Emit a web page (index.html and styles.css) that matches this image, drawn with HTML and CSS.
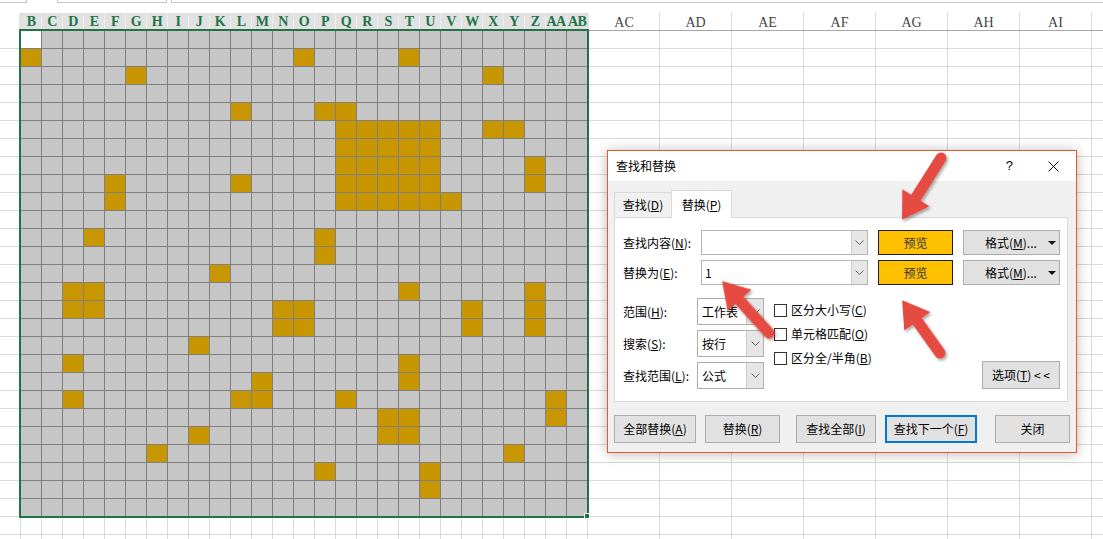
FILE: index.html
```html
<!DOCTYPE html>
<html lang="zh-CN">
<head>
<meta charset="utf-8">
<title>查找和替换</title>
<link rel="stylesheet" href="styles.css">
</head>
<body>
<div class="topbar"><div class="tb1"></div><div class="tb2"></div><div class="tb3"></div></div>
<div class="spacer"></div>
<div class="colhead">
  <div class="ch-gut"></div>
  <div class="ch-sel"><span>B</span><span>C</span><span>D</span><span>E</span><span>F</span><span>G</span><span>H</span><span>I</span><span>J</span><span>K</span><span>L</span><span>M</span><span>N</span><span>O</span><span>P</span><span>Q</span><span>R</span><span>S</span><span>T</span><span>U</span><span>V</span><span>W</span><span>X</span><span>Y</span><span>Z</span><span>AA</span><span>AB</span></div>
  <div class="ch-r"><span>AC</span><span>AD</span><span>AE</span><span>AF</span><span>AG</span><span>AH</span><span>AI</span><span></span></div>
</div>
<div class="sheet-body">
  <div class="gutter"></div>
  <div class="mid">
    <div class="grid">
<div class="r"><i class="a"></i><i></i><i></i><i></i><i></i><i></i><i></i><i></i><i></i> <i></i><i></i><i></i><i></i><i></i><i></i><i></i><i></i><i></i> <i></i><i></i><i></i><i></i><i></i><i></i><i></i><i></i><i></i></div>
<div class="r"><i class="g"></i><i></i><i></i><i></i><i></i><i></i><i></i><i></i><i></i> <i></i><i></i><i></i><i></i><i class="g"></i><i></i><i></i><i></i><i></i> <i class="g"></i><i></i><i></i><i></i><i></i><i></i><i></i><i></i><i></i></div>
<div class="r"><i></i><i></i><i></i><i></i><i></i><i class="g"></i><i></i><i></i><i></i> <i></i><i></i><i></i><i></i><i></i><i></i><i></i><i></i><i></i> <i></i><i></i><i></i><i></i><i class="g"></i><i></i><i></i><i></i><i></i></div>
<div class="r"><i></i><i></i><i></i><i></i><i></i><i></i><i></i><i></i><i></i> <i></i><i></i><i></i><i></i><i></i><i></i><i></i><i></i><i></i> <i></i><i></i><i></i><i></i><i></i><i></i><i></i><i></i><i></i></div>
<div class="r"><i></i><i></i><i></i><i></i><i></i><i></i><i></i><i></i><i></i> <i></i><i class="g"></i><i></i><i></i><i></i><i class="g"></i><i class="g"></i><i></i><i></i> <i></i><i></i><i></i><i></i><i></i><i></i><i></i><i></i><i></i></div>
<div class="r"><i></i><i></i><i></i><i></i><i></i><i></i><i></i><i></i><i></i> <i></i><i></i><i></i><i></i><i></i><i></i><i class="g"></i><i class="g"></i><i class="g"></i> <i class="g"></i><i class="g"></i><i></i><i></i><i class="g"></i><i class="g"></i><i></i><i></i><i></i></div>
<div class="r"><i></i><i></i><i></i><i></i><i></i><i></i><i></i><i></i><i></i> <i></i><i></i><i></i><i></i><i></i><i></i><i class="g"></i><i class="g"></i><i class="g"></i> <i class="g"></i><i class="g"></i><i></i><i></i><i></i><i></i><i></i><i></i><i></i></div>
<div class="r"><i></i><i></i><i></i><i></i><i></i><i></i><i></i><i></i><i></i> <i></i><i></i><i></i><i></i><i></i><i></i><i class="g"></i><i class="g"></i><i class="g"></i> <i class="g"></i><i class="g"></i><i></i><i></i><i></i><i></i><i class="g"></i><i></i><i></i></div>
<div class="r"><i></i><i></i><i></i><i></i><i class="g"></i><i></i><i></i><i></i><i></i> <i></i><i class="g"></i><i></i><i></i><i></i><i></i><i class="g"></i><i class="g"></i><i class="g"></i> <i class="g"></i><i class="g"></i><i></i><i></i><i></i><i></i><i class="g"></i><i></i><i></i></div>
<div class="r"><i></i><i></i><i></i><i></i><i class="g"></i><i></i><i></i><i></i><i></i> <i></i><i></i><i></i><i></i><i></i><i></i><i class="g"></i><i class="g"></i><i class="g"></i> <i class="g"></i><i class="g"></i><i class="g"></i><i></i><i></i><i></i><i></i><i></i><i></i></div>
<div class="r"><i></i><i></i><i></i><i></i><i></i><i></i><i></i><i></i><i></i> <i></i><i></i><i></i><i></i><i></i><i></i><i></i><i></i><i></i> <i></i><i></i><i></i><i></i><i></i><i></i><i></i><i></i><i></i></div>
<div class="r"><i></i><i></i><i></i><i class="g"></i><i></i><i></i><i></i><i></i><i></i> <i></i><i></i><i></i><i></i><i></i><i class="g"></i><i></i><i></i><i></i> <i></i><i></i><i></i><i></i><i></i><i></i><i></i><i></i><i></i></div>
<div class="r"><i></i><i></i><i></i><i></i><i></i><i></i><i></i><i></i><i></i> <i></i><i></i><i></i><i></i><i></i><i class="g"></i><i></i><i></i><i></i> <i></i><i></i><i></i><i></i><i></i><i></i><i></i><i></i><i></i></div>
<div class="r"><i></i><i></i><i></i><i></i><i></i><i></i><i></i><i></i><i></i> <i class="g"></i><i></i><i></i><i></i><i></i><i></i><i></i><i></i><i></i> <i></i><i></i><i></i><i></i><i></i><i></i><i></i><i></i><i></i></div>
<div class="r"><i></i><i></i><i class="g"></i><i class="g"></i><i></i><i></i><i></i><i></i><i></i> <i></i><i></i><i></i><i></i><i></i><i></i><i></i><i></i><i></i> <i class="g"></i><i></i><i></i><i></i><i></i><i></i><i class="g"></i><i></i><i></i></div>
<div class="r"><i></i><i></i><i class="g"></i><i class="g"></i><i></i><i></i><i></i><i></i><i></i> <i></i><i></i><i></i><i class="g"></i><i class="g"></i><i></i><i></i><i></i><i></i> <i></i><i></i><i></i><i class="g"></i><i></i><i></i><i class="g"></i><i></i><i></i></div>
<div class="r"><i></i><i></i><i></i><i></i><i></i><i></i><i></i><i></i><i></i> <i></i><i></i><i></i><i class="g"></i><i class="g"></i><i></i><i></i><i></i><i></i> <i></i><i></i><i></i><i class="g"></i><i></i><i></i><i class="g"></i><i></i><i></i></div>
<div class="r"><i></i><i></i><i></i><i></i><i></i><i></i><i></i><i></i><i class="g"></i> <i></i><i></i><i></i><i></i><i></i><i></i><i></i><i></i><i></i> <i></i><i></i><i></i><i></i><i></i><i></i><i></i><i></i><i></i></div>
<div class="r"><i></i><i></i><i class="g"></i><i></i><i></i><i></i><i></i><i></i><i></i> <i></i><i></i><i></i><i></i><i></i><i></i><i></i><i></i><i></i> <i class="g"></i><i></i><i></i><i></i><i></i><i></i><i></i><i></i><i></i></div>
<div class="r"><i></i><i></i><i></i><i></i><i></i><i></i><i></i><i></i><i></i> <i></i><i></i><i class="g"></i><i></i><i></i><i></i><i></i><i></i><i></i> <i class="g"></i><i></i><i></i><i></i><i></i><i></i><i></i><i></i><i></i></div>
<div class="r"><i></i><i></i><i class="g"></i><i></i><i></i><i></i><i></i><i></i><i></i> <i></i><i class="g"></i><i class="g"></i><i></i><i></i><i></i><i class="g"></i><i></i><i></i> <i></i><i></i><i></i><i></i><i></i><i></i><i></i><i class="g"></i><i></i></div>
<div class="r"><i></i><i></i><i></i><i></i><i></i><i></i><i></i><i></i><i></i> <i></i><i></i><i></i><i></i><i></i><i></i><i></i><i></i><i class="g"></i> <i class="g"></i><i></i><i></i><i></i><i></i><i></i><i></i><i class="g"></i><i></i></div>
<div class="r"><i></i><i></i><i></i><i></i><i></i><i></i><i></i><i></i><i class="g"></i> <i></i><i></i><i></i><i></i><i></i><i></i><i></i><i></i><i class="g"></i> <i class="g"></i><i></i><i></i><i></i><i></i><i></i><i></i><i></i><i></i></div>
<div class="r"><i></i><i></i><i></i><i></i><i></i><i></i><i class="g"></i><i></i><i></i> <i></i><i></i><i></i><i></i><i></i><i></i><i></i><i></i><i></i> <i></i><i></i><i></i><i></i><i></i><i class="g"></i><i></i><i></i><i></i></div>
<div class="r"><i></i><i></i><i></i><i></i><i></i><i></i><i></i><i></i><i></i> <i></i><i></i><i></i><i></i><i></i><i class="g"></i><i></i><i></i><i></i> <i></i><i class="g"></i><i></i><i></i><i></i><i></i><i></i><i></i><i></i></div>
<div class="r"><i></i><i></i><i></i><i></i><i></i><i></i><i></i><i></i><i></i> <i></i><i></i><i></i><i></i><i></i><i></i><i></i><i></i><i></i> <i></i><i class="g"></i><i></i><i></i><i></i><i></i><i></i><i></i><i></i></div>
<div class="r"><i></i><i></i><i></i><i></i><i></i><i></i><i></i><i></i><i></i> <i></i><i></i><i></i><i></i><i></i><i></i><i></i><i></i><i></i> <i></i><i></i><i></i><i></i><i></i><i></i><i></i><i></i><i></i></div>
    </div>
    <div class="below"></div>
  </div>
  <div class="right"></div>
</div>
<div class="handle"></div>

<div class="dlg">
  <div class="dt">
    <span class="dtt">查找和替换</span>
    <span class="help">?</span>
    <svg class="xbtn" width="11" height="11" viewBox="0 0 11 11"><path d="M0.5 0.5 L10.5 10.5 M10.5 0.5 L0.5 10.5" stroke="#111" stroke-width="1" fill="none"/></svg>
  </div>
  <div class="db">
    <div class="tabs">
      <div class="tab">查找(<u>D</u>)</div>
      <div class="tab on">替换(<u>P</u>)</div>
    </div>
    <div class="panel">
      <div class="frow">
        <span class="fl">查找内容(<u>N</u>):</span>
        <div class="combo"><span class="cv"></span><span class="dd"><svg width="9" height="5" viewBox="0 0 9 5"><path d="M0.5 0.5 L4.5 4.5 L8.5 0.5" fill="none" stroke="#666"/></svg></span></div>
        <div class="pv">预览</div>
        <div class="fmt"><span>格式(<u>M</u>)...</span><svg width="8" height="4" viewBox="0 0 8 4"><path d="M0 0 H8 L4 4 Z" fill="#111"/></svg></div>
      </div>
      <div class="frow">
        <span class="fl">替换为(<u>E</u>):</span>
        <div class="combo"><span class="cv">1</span><span class="dd"><svg width="9" height="5" viewBox="0 0 9 5"><path d="M0.5 0.5 L4.5 4.5 L8.5 0.5" fill="none" stroke="#666"/></svg></span></div>
        <div class="pv">预览</div>
        <div class="fmt"><span>格式(<u>M</u>)...</span><svg width="8" height="4" viewBox="0 0 8 4"><path d="M0 0 H8 L4 4 Z" fill="#111"/></svg></div>
      </div>
      <div class="opts">
        <div class="sels">
          <div class="srow"><span class="sl">范围(<u>H</u>):</span><div class="sel"><span>工作表</span><i class="dd"><svg width="9" height="5" viewBox="0 0 9 5"><path d="M0.5 0.5 L4.5 4.5 L8.5 0.5" fill="none" stroke="#666"/></svg></i></div></div>
          <div class="srow"><span class="sl">搜索(<u>S</u>):</span><div class="sel"><span>按行</span><i class="dd"><svg width="9" height="5" viewBox="0 0 9 5"><path d="M0.5 0.5 L4.5 4.5 L8.5 0.5" fill="none" stroke="#666"/></svg></i></div></div>
          <div class="srow"><span class="sl">查找范围(<u>L</u>):</span><div class="sel"><span>公式</span><i class="dd"><svg width="9" height="5" viewBox="0 0 9 5"><path d="M0.5 0.5 L4.5 4.5 L8.5 0.5" fill="none" stroke="#666"/></svg></i></div></div>
        </div>
        <div class="chks">
          <div class="chk"><i class="box"></i>区分大小写(<u>C</u>)</div>
          <div class="chk"><i class="box"></i>单元格匹配(<u>O</u>)</div>
          <div class="chk"><i class="box"></i>区分全/半角(<u>B</u>)</div>
        </div>
        <div class="optb">选项(<u>T</u>) &lt; &lt;</div>
      </div>
    </div>
    <div class="btns">
      <div class="btn b1">全部替换(<u>A</u>)</div>
      <div class="btn b2">替换(<u>R</u>)</div>
      <div class="btn b3">查找全部(<u>I</u>)</div>
      <div class="btn b4">查找下一个(<u>F</u>)</div>
      <div class="btn b5">关闭</div>
    </div>
  </div>
</div>

<svg class="arrows" width="1103" height="539" viewBox="0 0 1103 539">
  <defs>
    <filter id="sh" x="-30%" y="-30%" width="160%" height="160%">
      <feDropShadow dx="1.5" dy="2" stdDeviation="1.8" flood-color="#000" flood-opacity="0.35"/>
    </filter>
  </defs>
  <g fill="#e54b3f" filter="url(#sh)">
    <path transform="translate(941,158) rotate(122.3)" d="M0,-5.5 H47 V-16 L73,0 L47,16 V5.5 H0 A5.5,5.5 0 0 1 0,-5.5 Z"/>
    <path transform="translate(769,333) rotate(-132.1)" d="M0,-5.5 H44 V-16 L70,0 L44,16 V5.5 H0 A5.5,5.5 0 0 1 0,-5.5 Z"/>
    <path transform="translate(940,353) rotate(-125.6)" d="M0,-5.5 H39 V-16 L65,0 L39,16 V5.5 H0 A5.5,5.5 0 0 1 0,-5.5 Z"/>
  </g>
</svg>
</body>
</html>
```
FILE: styles.css
```css
* { box-sizing: border-box; margin: 0; padding: 0; }
html, body { background: #fff; }
body {
  width: 1103px;
  height: 539px;
  overflow: hidden;
  position: relative;
  font-family: "Noto Sans CJK SC", "Liberation Sans", sans-serif;
}

/* top strip (bottom edge of formula bar) */
.topbar { height: 3px; display: flex; }
.tb1 { width: 27px; border-right: 1px solid #c6c6c6; border-bottom: 1px solid #c6c6c6; }
.tb2 { margin-left: 30px; width: 110px; border: 1px solid #c6c6c6; border-top: 0; }
.tb3 { margin-left: 4px; flex: 1; border: 1px solid #c6c6c6; border-top: 0; border-right: 0; }
.spacer { height: 10px; }

/* column header */
.colhead { display: flex; height: 18px; }
.ch-gut { width: 19px; flex: none; }
.ch-sel {
  width: 570px; flex: none; display: flex;
  background: #e1e1e1;
  border-bottom: 2px solid #217346;
  padding-left: 2px;
}
.ch-sel span {
  width: 21px; flex: none;
  border-right: 1px solid #efefef;
  font: bold 14px/18px "Liberation Serif", serif;
  color: #217346;
  text-align: center;
  letter-spacing: -0.6px;
  white-space: nowrap;
  overflow: visible;
}
.ch-sel span:last-child { width: 20px; border-right: 0; }
.ch-r { flex: 1; display: flex; border-bottom: 1px solid #a6a6a6; overflow: hidden; }
.ch-r span {
  width: 72px; flex: none;
  border-right: 1px solid #d9d9d9;
  text-align: center;
  font: 14px/19px "Liberation Serif", serif;
  color: #444;
}
.ch-r span:first-child { width: 71px; }

/* sheet body */
.sheet-body { display: flex; height: 508px; }
.gutter {
  width: 19px; flex: none;
  background-image: linear-gradient(to bottom, transparent 17px, #d9d9d9 17px);
  background-size: 100% 18px;
}
.mid { width: 570px; flex: none; display: flex; flex-direction: column; }
.grid {
  border: 2px solid #217346;
  border-top: 0;
  display: flex;
  flex-direction: column;
}
.r { display: flex; }
.r i {
  display: block;
  width: 21px; height: 18px; flex: none;
  background: #c6c6c6;
  border-right: 1px solid #7f7f7f;
  border-bottom: 1px solid #7f7f7f;
}
.r i:last-child { width: 20px; border-right: 0; }
.r:last-child i { height: 17px; border-bottom: 0; }
.r i.g { background: #c89600; }
.r i.a { background: #fff; }
.below {
  flex: 1;
  background-image:
    linear-gradient(to bottom, transparent 17px, #d9d9d9 17px),
    linear-gradient(to right, transparent 20px, #d9d9d9 20px);
  background-size: 100% 18px, 21px 100%;
  background-position: 0 -1px, 2px 0;
}
.right {
  flex: 1;
  background-image:
    linear-gradient(to bottom, transparent 17px, #d9d9d9 17px),
    linear-gradient(to right, transparent 71px, #d9d9d9 71px);
  background-size: 100% 18px, 72px 100%;
  background-position: 0 0, -1px 0;
}
.handle {
  position: absolute;
  left: 584px; top: 513px;
  width: 6px; height: 6px;
  background: #217346;
  border: 1px solid #fff;
}

/* dialog */
.dlg {
  position: absolute;
  left: 607px; top: 150px;
  width: 470px;
  border: 1px solid #e2592c;
  background: #f0f0f0;
  box-shadow: 0 1px 12px rgba(0, 0, 0, 0.28);
  font: 12px/16px "Noto Sans CJK SC", "Liberation Sans", sans-serif;
  color: #000;
}
.dlg u { text-decoration: underline; text-underline-offset: 1px; }
.dt { height: 30px; background: #fff; display: flex; align-items: center; padding-left: 8px; }
.dtt { flex: 1; }
.help { font: 13px/16px "Liberation Sans", sans-serif; margin-right: 35px; }
.xbtn { display: block; margin-right: 17px; }
.db { padding: 9px 8px 9px 6px; }
.tabs { display: flex; align-items: flex-end; height: 27px; }
.tab {
  width: 57px; height: 25px;
  border: 1px solid #d9d9d9; border-bottom: 0; border-right: 0;
  display: flex; align-items: center; justify-content: center;
}
.tab.on {
  width: 61px; height: 28px;
  margin-bottom: -1px;
  background: #fff;
  border-right: 1px solid #d9d9d9;
  position: relative; z-index: 1;
}
.panel {
  height: 185px;
  background: #fff;
  border: 1px solid #d9d9d9;
  padding: 12px 7px 12px 8px;
}
.frow { display: flex; align-items: center; height: 25px; }
.frow + .frow { margin-top: 5px; }
.fl { width: 78px; flex: none; }
.combo {
  width: 167px; height: 25px; flex: none;
  border: 1px solid #b4b4b4; background: #fff;
  display: flex;
}
.cv { flex: 1; padding-left: 3px; line-height: 23px; }
.dd {
  width: 16px; flex: none;
  background: #e6e6e6;
  border-left: 1px solid #cccccc;
  display: flex; align-items: center; justify-content: center;
}
.pv {
  margin-left: 10px; width: 75px; height: 25px; flex: none;
  background: #ffc000; border: 1px solid #1f1f1f;
  display: flex; align-items: center; justify-content: center;
  color: #333;
}
.fmt {
  margin-left: 10px; width: 97px; height: 25px; flex: none;
  background: #e1e1e1; border: 1px solid #adadad;
  display: flex; align-items: center; padding-left: 21px; padding-right: 3px;
}
.fmt span { flex: 1; }
.opts { display: flex; margin-top: 13px; height: 91px; }
.sels { display: flex; flex-direction: column; gap: 5px; }
.srow { display: flex; align-items: center; height: 27px; }
.sl { width: 74px; flex: none; }
.sel {
  width: 67px; height: 27px; flex: none;
  border: 1px solid #adadad; background: #fff;
  display: flex;
}
.sel span { flex: 1; padding-left: 4px; line-height: 25px; }
.sel .dd { width: 17px; }
.chks { margin-left: 10px; display: flex; flex-direction: column; }
.chk { height: 24px; display: flex; align-items: center; }
.box {
  display: block;
  width: 13px; height: 13px;
  border: 1px solid #333; background: #fff;
  margin-right: 4px;
}
.optb {
  margin-left: auto; align-self: flex-end;
  width: 78px; height: 28px;
  background: #e1e1e1; border: 1px solid #adadad;
  display: flex; align-items: center; justify-content: center;
}
.btns { display: flex; margin-top: 13px; }
.btn {
  height: 28px; flex: none;
  background: #e1e1e1; border: 1px solid #adadad;
  display: flex; align-items: center; justify-content: center;
}
.b1 { width: 82px; }
.b2 { width: 75px; margin-left: 9px; }
.b3 { width: 80px; margin-left: 16px; }
.b4 { width: 92px; margin-left: 9px; border: 2px solid #0078d7; }
.b5 { width: 75px; margin-left: 18px; }

.arrows { position: absolute; left: 0; top: 0; pointer-events: none; }
```
